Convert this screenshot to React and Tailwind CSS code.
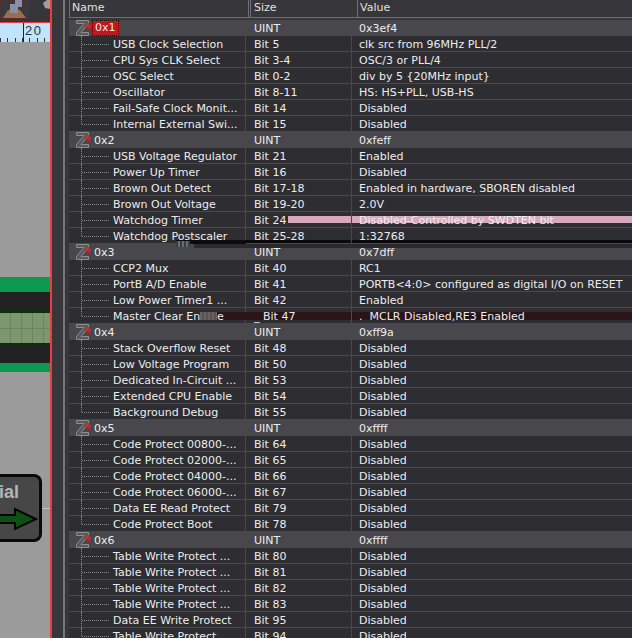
const groups = [
  ["0x1", "0x3ef4", [
    ["USB Clock Selection", "Bit 5", "clk src from 96MHz PLL/2"],
    ["CPU Sys CLK Select", "Bit 3-4", "OSC/3 or PLL/4"],
    ["OSC Select", "Bit 0-2", "div by 5 {20MHz input}"],
    ["Oscillator", "Bit 8-11", "HS: HS+PLL, USB-HS"],
    ["Fail-Safe Clock Monit...", "Bit 14", "Disabled"],
    ["Internal External Swi...", "Bit 15", "Disabled"],
  ]],
  ["0x2", "0xfeff", [
    ["USB Voltage Regulator", "Bit 21", "Enabled"],
    ["Power Up Timer", "Bit 16", "Disabled"],
    ["Brown Out Detect", "Bit 17-18", "Enabled in hardware, SBOREN disabled"],
    ["Brown Out Voltage", "Bit 19-20", "2.0V"],
    ["Watchdog Timer", "Bit 24", "Disabled-Controlled by SWDTEN bit"],
    ["Watchdog Postscaler", "Bit 25-28", "1:32768"],
  ]],
  ["0x3", "0x7dff", [
    ["CCP2 Mux", "Bit 40", "RC1"],
    ["PortB A/D Enable", "Bit 41", "PORTB<4:0> configured as digital I/O on RESET"],
    ["Low Power Timer1 ...", "Bit 42", "Enabled"],
    ["Master Clear Enable", "_ Bit 47", ".  MCLR Disabled,RE3 Enabled"],
  ]],
  ["0x4", "0xff9a", [
    ["Stack Overflow Reset", "Bit 48", "Disabled"],
    ["Low Voltage Program", "Bit 50", "Disabled"],
    ["Dedicated In-Circuit ...", "Bit 53", "Disabled"],
    ["Extended CPU Enable", "Bit 54", "Disabled"],
    ["Background Debug", "Bit 55", "Disabled"],
  ]],
  ["0x5", "0xffff", [
    ["Code Protect 00800-...", "Bit 64", "Disabled"],
    ["Code Protect 02000-...", "Bit 65", "Disabled"],
    ["Code Protect 04000-...", "Bit 66", "Disabled"],
    ["Code Protect 06000-...", "Bit 67", "Disabled"],
    ["Data EE Read Protect", "Bit 79", "Disabled"],
    ["Code Protect Boot", "Bit 78", "Disabled"],
  ]],
  ["0x6", "0xffff", [
    ["Table Write Protect ...", "Bit 80", "Disabled"],
    ["Table Write Protect ...", "Bit 81", "Disabled"],
    ["Table Write Protect ...", "Bit 82", "Disabled"],
    ["Table Write Protect ...", "Bit 83", "Disabled"],
    ["Data EE Write Protect", "Bit 95", "Disabled"],
    ["Table Write Protect", "Bit 94", "Disabled"],
  ]],
];

function ZIcon() {
  return (
    <svg width="18" height="16" viewBox="0 0 18 16" className="shrink-0">
      <path d="M1.5 0.5H13.5V3.5L6 12.5H13.5V15.5H1.5V12.5L9 3.5H1.5Z" fill="#5a5a5e" stroke="#8e8e8e" strokeWidth="1" />
      <path d="M10.5 6H16.5M13.5 3V9" stroke="#e01f2a" strokeWidth="2" />
    </svg>
  );
}

function GroupRow({ name, value, selected }) {
  return (
    <div className="flex h-4 bg-[#47474c] text-[#ececec]">
      <div className="flex w-[177px] items-center pl-[6px]">
        <ZIcon />
        {selected ? (
          <span className="relative z-10 -ml-[1px] flex h-4 items-center border border-dotted border-[#111] bg-[#bd1a1f] px-[2px] text-[#f4e6e6]">{name}</span>
        ) : (
          <span className="relative z-10 ml-[1px] pt-px">{name}</span>
        )}
      </div>
      <div className="relative z-10 w-[106px] pl-[8px] pt-px">UINT</div>
      <div className="relative z-10 flex-1 pl-[7px] pt-px">{value}</div>
    </div>
  );
}

function ChildRow({ name, size, value, last }) {
  return (
    <div className="flex h-4 bg-[#2d2d32] text-[#ececec]">
      <div className="relative w-[177px] border-b border-r border-[#48484d] pl-[44px] pt-px">
        <span className={`absolute left-[12px] top-0 w-0 border-l border-dotted border-[#8a8a8a] ${last ? "h-2" : "h-4"}`} />
        <span className="absolute left-[13px] top-[8px] h-0 w-[27px] border-t border-dotted border-[#8a8a8a]" />
        <span className="relative z-10 whitespace-nowrap">{name}</span>
      </div>
      <div className="relative z-10 w-[106px] whitespace-pre border-b border-r border-[#48484d] pl-[8px] pt-px">{size}</div>
      <div className="relative z-10 flex-1 whitespace-pre border-b border-[#48484d] pl-[7px] pt-px">{value}</div>
    </div>
  );
}

export default function App() {
  return (
    <div className="relative flex h-[638px] w-[632px] overflow-hidden bg-[#36363b] font-['DejaVu_Sans',sans-serif] text-[11px] leading-4">
      <div className="flex h-full w-[50px] shrink-0 flex-col bg-[#9b9b9b]">
        <div className="flex h-[22px] items-start bg-[#36363a]">
          <svg width="50" height="19" viewBox="0 0 50 19">
            <rect x="0" y="0" width="29.5" height="18.5" fill="#3a3a3e" stroke="#5c2a2a" />
            <path d="M3 18L8 10H20L26 18Z" fill="#96704a" />
            <path d="M10 4H15V0H22V7H18V13H10Z" fill="#8e8ea2" />
            <path d="M43 3L47 0H50V9L45 8Z" fill="#a89a96" />
          </svg>
        </div>
        <div className="h-[1px] bg-[#ef3b3b]" />
        <div className="relative h-[19px] bg-[#bfe4fb] pl-[25px] pt-[1px] font-['Liberation_Sans',sans-serif] text-[13px] leading-[14px] tracking-[1.5px] text-[#333]">
          <span className="absolute left-[23px] top-0 h-[19px] border-l border-[#222]" />
          20
          <div className="absolute bottom-0 left-0 h-[4px] w-full bg-[repeating-linear-gradient(90deg,#333_0,#333_1px,transparent_1px,transparent_7.3px)]" />
        </div>
        <div className="h-[235px]" />
        <div className="h-[15px] bg-[#0d9a50]" />
        <div className="h-[18px] bg-[#222224]" />
        <div className="h-[3px] bg-[#0c2e0c]" />
        <div className="flex h-[30px] flex-col justify-center bg-[#7c9670] bg-[repeating-linear-gradient(90deg,transparent_0,transparent_10px,#6a8360_10px,#6a8360_11px)]">
          <div className="h-px bg-[#6a8360]" />
        </div>
        <div className="h-[3px] bg-[#0c2e0c]" />
        <div className="h-[17px] bg-[#222224]" />
        <div className="h-[9px] bg-[#0d9a50]" />
        <div className="h-[102px]" />
        <div className="relative h-[68px] w-[42px] overflow-hidden rounded-r-[8px] border-[3px] border-l-0 border-[#0a0a0a] bg-[#474747]">
          <span className="absolute -left-[1px] top-[5px] font-['Liberation_Sans',sans-serif] text-[18px] font-bold leading-5 text-[#b5b5b5]">ial</span>
          <svg width="39" height="24" viewBox="0 0 39 24" className="absolute left-0 top-[30px]">
            <path d="M-2 8H15V2L36 12L15 22V16H-2Z" fill="#0e5014" stroke="#050505" strokeWidth="2" />
          </svg>
        </div>
        <div className="absolute left-[42px] top-[508px] h-px w-[8px] bg-[#c4c4c4]" />
      </div>
      <div className="flex h-full w-[19px] shrink-0 border-l-2 border-[#ef3b3b] bg-[#36363b]">
        <div className="ml-[11px] h-full w-[2px] bg-[#77777b]" />
      </div>
      <div className="relative flex-1">
        <div className="flex h-[18px] border-b border-[#707074] text-[#e0e0e0]">
          <div className="w-[180px] border-x border-[#707074] pl-[2px]">Name</div>
          <div className="ml-[1px] w-[108px] border-x border-[#707074] pl-[3px]">Size</div>
          <div className="flex-1 pl-[2px]">Value</div>
        </div>
        <div className="h-[2px]" />
        {groups.map((g, gi) => (
          <div key={g[0]}>
            <GroupRow name={g[0]} value={g[1]} selected={gi === 0} />
            {g[2].map((r, i) => (
              <ChildRow key={i} name={r[0]} size={r[1]} value={r[2]} last={i === g[2].length - 1} />
            ))}
          </div>
        ))}
        <div className="absolute left-[219px] right-0 top-[216px] h-[7px] bg-[#d8a8bc]" />
        <div className="absolute left-[107px] right-0 top-[240px] h-[4px] bg-[#0b0b0d]" />
        <div className="absolute left-[125px] right-0 top-[244px] h-[4px] bg-[#2a2a2e]" />
        <div className="absolute left-[107px] top-[241px] h-[6px] w-[14px] bg-[repeating-linear-gradient(90deg,#3a3a48_0,#3a3a48_2px,#6a6a78_2px,#6a6a78_4px)]" />
        <div className="absolute left-[134px] right-0 top-[312px] h-[8px] bg-[#2a1418]" />
        <div className="absolute left-[131px] top-[312px] z-20 h-[8px] w-[17px] bg-[repeating-linear-gradient(90deg,#7a5a5c_0,#7a5a5c_2px,#4a5a50_2px,#4a5a50_4px)]" />
      </div>
    </div>
  );
}
